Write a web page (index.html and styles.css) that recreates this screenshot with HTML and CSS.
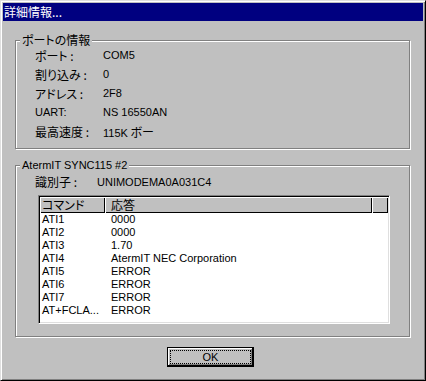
FILE: index.html
```html
<!DOCTYPE html>
<html>
<head>
<meta charset="utf-8">
<link rel="stylesheet" href="styles.css">
</head>
<body>
<div class="window">
  <div class="titlebar">詳細情報...</div>
  <div class="group g1">
    <span class="legend">ポートの情報</span>
    <div class="props">
      <span>ポート :</span><span class="lat">COM5</span>
      <span>割り込み :</span><span class="lat">0</span>
      <span>アドレス :</span><span class="lat">2F8</span>
      <span class="lat">UART:</span><span class="lat">NS 16550AN</span>
      <span>最高速度 :</span><span><span class="lat">115K</span> ボー</span>
    </div>
  </div>
  <div class="group g2">
    <span class="legend lat">AtermIT SYNC115 #2</span>
    <div class="props ident">
      <span>識別子 :</span><span class="lat">UNIMODEMA0A031C4</span>
    </div>
    <div class="list">
      <div class="lv-head">
        <div class="hc c1">コマンド</div>
        <div class="hc c2">応答</div>
        <div class="hc c3"></div>
      </div>
      <div class="lv-body">
        <div class="lv-row"><span>ATI1</span><span>0000</span></div>
        <div class="lv-row"><span>ATI2</span><span>0000</span></div>
        <div class="lv-row"><span>ATI3</span><span>1.70</span></div>
        <div class="lv-row"><span>ATI4</span><span>AtermIT NEC Corporation</span></div>
        <div class="lv-row"><span>ATI5</span><span>ERROR</span></div>
        <div class="lv-row"><span>ATI6</span><span>ERROR</span></div>
        <div class="lv-row"><span>ATI7</span><span>ERROR</span></div>
        <div class="lv-row"><span>AT+FCLA...</span><span>ERROR</span></div>
      </div>
    </div>
  </div>
  <div class="buttons">
    <button class="btn"><span class="focus lat">OK</span></button>
  </div>
</div>
</body>
</html>
```
FILE: styles.css
```css
* { box-sizing: border-box; }
body {
  margin: 0;
  font-family: "Noto Sans CJK JP", "Liberation Sans", sans-serif;
  font-size: 12px;
  font-feature-settings: "palt";
  color: #000;
}
.lat {
  font-family: "Liberation Sans", "Noto Sans CJK JP", sans-serif;
  font-size: 11px;
}
.window {
  width: 426px;
  height: 381px;
  background: #c0c0c0;
  border: 1px solid;
  border-color: #dfdfdf #000 #000 #dfdfdf;
  box-shadow: inset 1px 1px #fff, inset -1px -1px #808080;
  padding: 2px;
}
.titlebar {
  height: 18px;
  background: #000080;
  color: #fff;
  line-height: 18px;
  padding-left: 1px;
}
.group {
  position: relative;
  margin-left: 12px;
  width: 395px;
  border: 1px solid #808080;
  box-shadow: 1px 1px 0 #fff, inset 1px 1px 0 #fff;
}
.legend {
  position: absolute;
  left: 4px;
  top: -9px;
  line-height: 16px;
  padding: 0 2px;
  background: #c0c0c0;
}
.g1 {
  margin-top: 19px;
  height: 109px;
  padding: 5px 0 0 19px;
}
.props {
  display: grid;
  grid-template-columns: 68px auto;
  grid-auto-rows: 19px;
  line-height: 19px;
}
.g2 {
  margin-top: 16px;
  height: 172px;
  padding: 8px 0 0 19px;
}
.ident {
  grid-template-columns: 62px auto;
  grid-auto-rows: 16px;
  line-height: 16px;
}
.list {
  margin-top: 5px;
  margin-left: 3px;
  width: 352px;
  height: 129px;
  background: #fff;
  border: 1px solid;
  border-color: #808080 #fff #fff #808080;
  box-shadow: inset 1px 1px #000, inset -1px -1px #dfdfdf;
  padding: 1px;
}
.lv-head {
  display: flex;
  height: 16px;
}
.hc {
  background: #c0c0c0;
  box-shadow: inset 1px 1px #fff, inset -1px -1px #000;
  line-height: 16px;
  height: 16px;
}
.c1 { width: 65px; padding-left: 2px; }
.c2 { width: 267px; padding-left: 6px; }
.c3 { flex: 1; }
.lv-row {
  display: grid;
  grid-template-columns: 65px 267px;
  height: 13px;
  line-height: 13px;
  font-family: "Liberation Sans", "Noto Sans CJK JP", sans-serif;
  font-size: 11px;
}
.lv-row span:first-child { padding-left: 2px; }
.lv-row span:last-child { padding-left: 6px; }
.buttons {
  margin-top: 10px;
  padding-left: 164px;
}
.btn {
  display: block;
  width: 87px;
  height: 20px;
  margin: 0;
  padding: 2px;
  background: #c0c0c0;
  border: 1px solid #000;
  box-shadow: inset -1px -1px #000, inset 1px 1px #fff, inset -2px -2px #808080;
  font: inherit;
  color: #000;
}
.focus {
  display: flex;
  align-items: center;
  justify-content: center;
  height: 14px;
  border: 1px dotted #000;
  line-height: 12px;
}
```
